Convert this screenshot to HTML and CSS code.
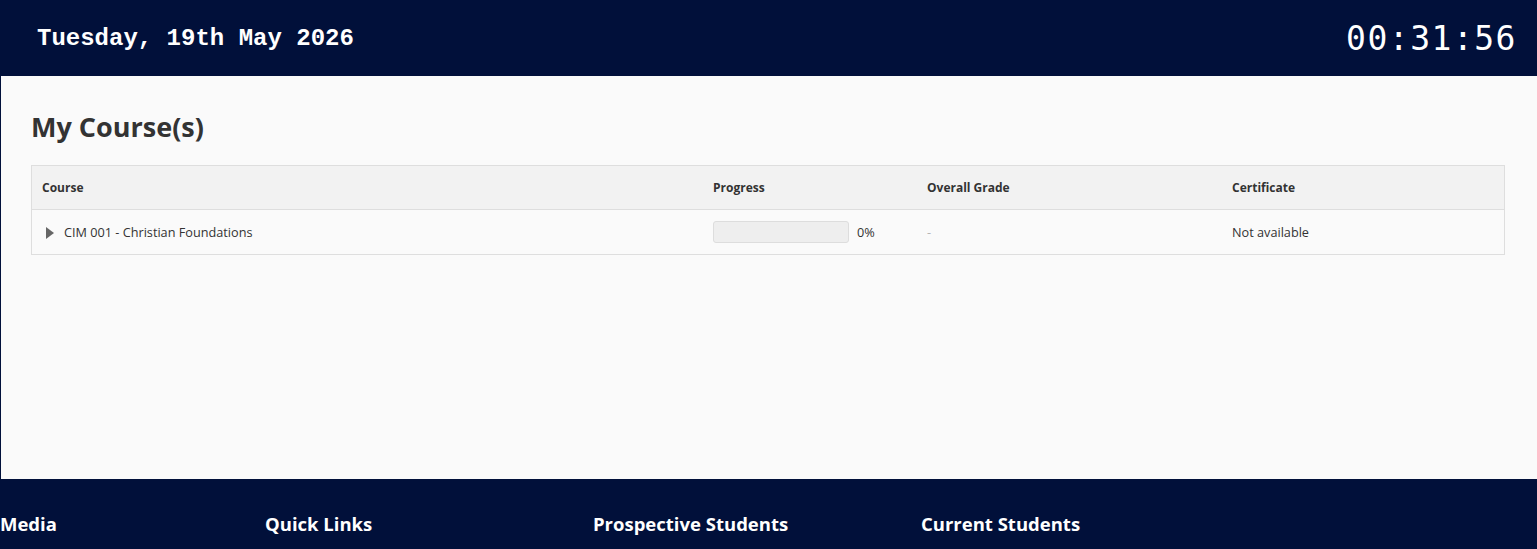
FILE: index.html
```html
<!DOCTYPE html>
<html lang="en">
<head>
    <meta charset="UTF-8">
    <meta name="viewport" content="width=device-width, initial-scale=1.0">
    <title>My Course(s)</title>
    <link rel="stylesheet" href="styles.css">
</head>
<body>
    <header class="topbar">
        <div class="topbar-date">Tuesday, 19th May 2026</div>
        <div class="topbar-clock">00:31:56</div>
    </header>

    <main class="main">
        <h1 class="page-title">My Course(s)</h1>

        <table class="courses">
            <thead>
                <tr>
                    <th class="col-course">Course</th>
                    <th class="col-progress">Progress</th>
                    <th class="col-grade">Overall Grade</th>
                    <th class="col-cert">Certificate</th>
                </tr>
            </thead>
            <tbody>
                <tr>
                    <td>
                        <span class="toggle"></span>CIM 001 - Christian Foundations
                    </td>
                    <td>
                        <div class="progress-cell">
                            <div class="progress-bar"><div class="progress-fill" style="width: 0%"></div></div>
                            <span class="progress-label">0%</span>
                        </div>
                    </td>
                    <td class="muted">-</td>
                    <td>Not available</td>
                </tr>
            </tbody>
        </table>
    </main>

    <footer class="footer">
        <div class="footer-col footer-col-first"><h3>Media</h3></div>
        <div class="footer-col"><h3>Quick Links</h3></div>
        <div class="footer-col"><h3>Prospective Students</h3></div>
        <div class="footer-col"><h3>Current Students</h3></div>
    </footer>
</body>
</html>
```

FILE: styles.css
```css
body {
    margin: 0;
    padding: 0;
    font-family: 'Open Sans', 'Noto Sans', sans-serif;
    background-color: #fafafa;
    color: #333;
}

/* Barra superior con fecha y reloj */
.topbar {
    height: 76px;
    background-color: #01103a;
    color: #fff;
    display: flex;
    align-items: center;
    justify-content: space-between;
    padding: 0 20px 0 37px;
}

.topbar-date {
    font-family: 'Liberation Mono', 'Courier New', monospace;
    font-weight: bold;
    font-size: 24px;
}

.topbar-clock {
    font-family: 'DejaVu Sans Mono', monospace;
    font-size: 33px;
    letter-spacing: 1.5px;
}

.main {
    height: 403px;
    box-sizing: border-box;
    padding: 18px 31px 0;
    border-left: 1px solid #01103a;
}

.page-title {
    margin: 0 0 1px -1px;
    font-size: 27px;
    font-weight: bold;
    color: #333;
    line-height: 66px;
    height: 70px;
}

.courses {
    width: 100%;
    border-collapse: collapse;
    border: 1px solid #dedede;
    font-size: 12px;
    margin-left: -1px;
}

.courses th {
    background-color: #f2f2f2;
    text-align: left;
    font-weight: bold;
    height: 43px;
    padding: 0 10px;
    border-bottom: 1px solid #dedede;
}

.courses td {
    height: 44px;
    padding: 0 10px;
    color: #333;
    font-size: 12.7px;
}

.col-course { width: 651px; }
.col-progress { width: 194px; }
.col-grade { width: 285px; }

.toggle {
    display: inline-block;
    width: 0;
    height: 0;
    border-top: 6px solid transparent;
    border-bottom: 6px solid transparent;
    border-left: 8px solid #666;
    margin: 0 10px 0 4px;
    vertical-align: -2px;
}

.progress-cell {
    display: flex;
    align-items: center;
    gap: 8px;
}

.progress-bar {
    width: 134px;
    height: 20px;
    background-color: #eee;
    border: 1px solid #ddd;
    border-radius: 3px;
}

.progress-fill {
    height: 100%;
    background-color: #5cb85c;
}

.courses td.muted {
    color: #b5b5b5;
}

/* Pie de página */
.footer {
    background-color: #01103a;
    color: #fff;
    height: 70px;
    display: flex;
    padding-top: 32px;
    box-sizing: border-box;
}

.footer-col {
    width: 328px;
    flex-shrink: 0;
}

.footer-col-first {
    width: 265px;
}

.footer-col h3 {
    margin: 0;
    font-size: 18.5px;
    font-weight: bold;
}
```
